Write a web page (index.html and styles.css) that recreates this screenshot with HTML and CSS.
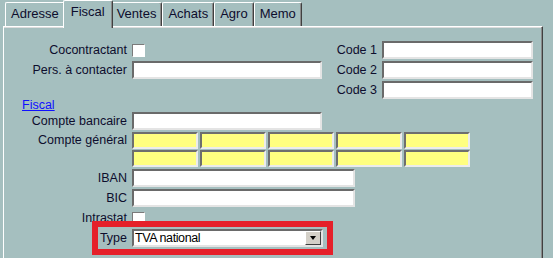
FILE: index.html
```html
<!DOCTYPE html>
<html lang="fr">
<head>
  <meta charset="UTF-8" />
  <title>Fiche tiers - Fiscal</title>
  <link rel="stylesheet" href="styles.css">
</head>
<body>
  <div class="tabs">
    <span class="tab">Adresse</span>
    <span class="tab active">Fiscal</span>
    <span class="tab">Ventes</span>
    <span class="tab">Achats</span>
    <span class="tab">Agro</span>
    <span class="tab">Memo</span>
  </div>

  <div class="panel">
    <div class="top-grid">
      <label class="lbl">Cocontractant</label>
      <input class="check" type="checkbox">
      <label class="lbl">Code 1</label>
      <input class="field code" type="text">

      <label class="lbl">Pers. à contacter</label>
      <input class="field medium" type="text">
      <label class="lbl">Code 2</label>
      <input class="field code" type="text">

      <span></span>
      <span></span>
      <label class="lbl">Code 3</label>
      <input class="field code" type="text">
    </div>

    <a class="section-link" href="#">Fiscal</a>

    <div class="form-grid">
      <label class="lbl">Compte bancaire</label>
      <input class="field medium" type="text">

      <label class="lbl top">Compte général</label>
      <div class="ledger">
        <!-- 2 lignes de 5 segments -->
        <span></span><span></span><span></span><span></span><span></span>
        <span></span><span></span><span></span><span></span><span></span>
      </div>

      <label class="lbl">IBAN</label>
      <input class="field long" type="text">

      <label class="lbl">BIC</label>
      <input class="field long" type="text">

      <label class="lbl">Intrastat</label>
      <input class="check" type="checkbox">

      <label class="lbl">Type</label>
      <div class="select">
        <span class="select-text">TVA national</span>
        <span class="select-btn"><i></i></span>
      </div>
    </div>

    <div class="highlight"></div>
  </div>
</body>
</html>
```

FILE: styles.css
```css
html, body {
  overflow: hidden;
}
body {
  margin: 0;
  background: #a5bfbf;
  font-family: "Liberation Sans", Arial, sans-serif;
  font-size: 12.5px;
  color: #0d0d2d;
}
.tabs {
  display: flex;
  align-items: flex-end;
  padding: 6px 0 0 5px;
  height: 26px;
  box-sizing: border-box;
}
.tab {
  position: relative;
  height: 24px;
  box-sizing: border-box;
  padding: 0 5px;
  line-height: 22px;
  font-size: 13px;
  border: 1px solid #fff;
  border-right-color: #404040;
  border-bottom: 0;
  border-radius: 2px 2px 0 0;
  box-shadow: inset -1px 0 #8a8a8a;
  background: #a5bfbf;
}
.tab.active {
  z-index: 1;
  height: 28px;
  margin: 0 -2px -2px;
  padding: 0 7px;
  line-height: 21px;
}
.panel {
  position: relative;
  margin-left: 3px;
  width: 540px;
  min-height: 300px;
  box-sizing: border-box;
  padding-top: 14px;
  border-top: 1px solid #fff;
  border-left: 1px solid #fff;
  border-right: 1px solid #404040;
  box-shadow: inset -1px 0 #8a8a8a, inset 0 1px #dcdcdc;
}
.lbl {
  justify-self: stretch;
  text-align: right;
  line-height: 18px;
  white-space: nowrap;
}
.lbl.top {
  line-height: 17px;
  align-self: start;
}
.top-grid {
  display: grid;
  grid-template-columns: 123px 190px 50px 151px;
  grid-auto-rows: 18px;
  column-gap: 5px;
  row-gap: 2px;
  align-items: center;
}
.form-grid {
  display: grid;
  grid-template-columns: 123px auto;
  column-gap: 5px;
  row-gap: 2px;
  align-items: center;
  justify-items: start;
}
.field {
  display: block;
  margin: 0;
  height: 18px;
  box-sizing: border-box;
  border: 2px solid;
  border-color: #6a6a6a #e4e4e4 #e4e4e4 #6a6a6a;
  background: #fff;
  padding: 0 2px;
  font: inherit;
}
.field.medium { width: 190px; }
.field.code { width: 151px; }
.field.long { width: 223px; }
.check {
  appearance: none;
  margin: 0;
  width: 13px;
  height: 13px;
  box-sizing: border-box;
  border: 1px solid;
  border-color: #7a7a7a #fff #fff #7a7a7a;
  background: #fff;
}
.section-link {
  display: block;
  height: 13px;
  line-height: 13px;
  padding-left: 18px;
  color: #1010ff;
  text-decoration: underline;
}
.ledger {
  display: grid;
  grid-template-columns: repeat(5, 66px);
  grid-auto-rows: 17px;
  column-gap: 2px;
  row-gap: 1px;
}
.ledger span {
  background: #ffff80;
  border: 2px solid;
  border-color: #6e6e6e #ececec #ececec #6e6e6e;
}
.select {
  display: flex;
  align-items: center;
  width: 191px;
  height: 18px;
  box-sizing: border-box;
  border: 2px solid;
  border-color: #6a6a6a #e4e4e4 #e4e4e4 #6a6a6a;
  background: #fff;
  color: #000;
}
.select-text {
  padding-left: 1px;
  letter-spacing: -0.4px;
}
.select-btn {
  margin-left: auto;
  width: 16px;
  height: 14px;
  box-sizing: border-box;
  border: 1px solid;
  border-color: #fff #404040 #404040 #fff;
  background: #d4d0c8;
  display: flex;
  align-items: center;
  justify-content: center;
}
.select-btn i {
  width: 0;
  height: 0;
  border-left: 3.5px solid transparent;
  border-right: 3.5px solid transparent;
  border-top: 4px solid #000;
}
.highlight {
  position: absolute;
  left: 88px;
  top: 194px;
  width: 241px;
  height: 34px;
  box-sizing: border-box;
  border: 6px solid #e5202a;
}
```
